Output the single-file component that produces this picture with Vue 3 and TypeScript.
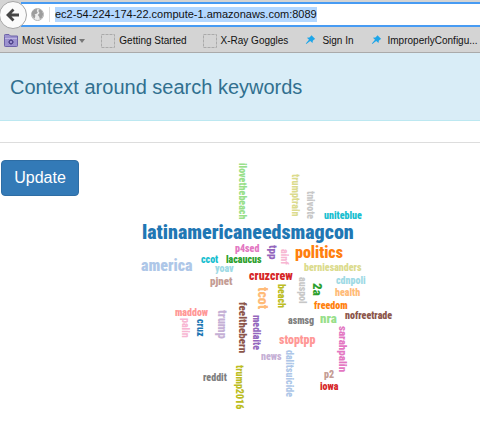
<script setup lang="ts">
interface Word {
  text: string
  x: number
  y: number
  size: number
  color: string
  vertical?: boolean
}

// x and y give the start of the word's baseline on the cloud canvas.
const words: Word[] = [
  { text: 'ilovethebeach', x: 239, y: 162, size: 10, color: '#98df8a', vertical: true },
  { text: 'trumptrain', x: 292, y: 173, size: 10, color: '#dbdb8d', vertical: true },
  { text: 'tnivote', x: 307, y: 190, size: 10, color: '#c7c7c7', vertical: true },
  { text: 'uniteblue', x: 324, y: 218, size: 10, color: '#17becf' },
  { text: 'latinamericaneedsmagcon', x: 142, y: 238, size: 20, color: '#1f77b4' },
  { text: 'p4sed', x: 235, y: 251, size: 10, color: '#e377c2' },
  { text: 'tpp', x: 269, y: 244, size: 11, color: '#9467bd', vertical: true },
  { text: 'ainf', x: 281, y: 248, size: 10, color: '#f7b6d2', vertical: true },
  { text: 'politics', x: 295, y: 257, size: 16, color: '#ff7f0e' },
  { text: 'ccot', x: 201, y: 262, size: 10, color: '#17becf' },
  { text: 'lacaucus', x: 226, y: 262, size: 10, color: '#2ca02c' },
  { text: 'america', x: 141, y: 270, size: 16, color: '#aec7e8' },
  { text: 'yoav', x: 215, y: 271, size: 10, color: '#9edae5' },
  { text: 'berniesanders', x: 304, y: 270, size: 10, color: '#dbdb8d' },
  { text: 'pjnet', x: 210, y: 284, size: 11, color: '#c49c94' },
  { text: 'cruzcrew', x: 249, y: 279, size: 12, color: '#d62728' },
  { text: 'cdnpoli', x: 336, y: 283, size: 10, color: '#9edae5' },
  { text: 'tcot', x: 258, y: 286, size: 14, color: '#ffbb78', vertical: true },
  { text: 'beach', x: 278, y: 283, size: 10, color: '#bcbd22', vertical: true },
  { text: 'auspol', x: 299, y: 276, size: 10, color: '#c7c7c7', vertical: true },
  { text: '2a', x: 313, y: 282, size: 13, color: '#2ca02c', vertical: true },
  { text: 'health', x: 335, y: 295, size: 10, color: '#ffbb78' },
  { text: 'freedom', x: 314, y: 308, size: 10, color: '#ff7f0e' },
  { text: 'maddow', x: 175, y: 315, size: 10, color: '#ff9896' },
  { text: 'asmsg', x: 288, y: 323, size: 10, color: '#7f7f7f' },
  { text: 'nra', x: 320, y: 322, size: 13, color: '#98df8a' },
  { text: 'nofreetrade', x: 345, y: 318, size: 10, color: '#8c564b' },
  { text: 'palin', x: 182, y: 317, size: 10, color: '#f7b6d2', vertical: true },
  { text: 'cruz', x: 197, y: 318, size: 10, color: '#1f77b4', vertical: true },
  { text: 'trump', x: 218, y: 309, size: 12, color: '#c5b0d5', vertical: true },
  { text: 'feelthebern', x: 239, y: 301, size: 11, color: '#8c564b', vertical: true },
  { text: 'mediaite', x: 253, y: 314, size: 10, color: '#9467bd', vertical: true },
  { text: 'stoptpp', x: 279, y: 343, size: 12, color: '#ff9896' },
  { text: 'sarahpalin', x: 339, y: 325, size: 11, color: '#e377c2', vertical: true },
  { text: 'news', x: 261, y: 359, size: 10, color: '#c5b0d5' },
  { text: 'dalitsuicide', x: 286, y: 349, size: 10, color: '#aec7e8', vertical: true },
  { text: 'reddit', x: 203, y: 380, size: 10, color: '#7f7f7f' },
  { text: 'trump2016', x: 236, y: 364, size: 10, color: '#bcbd22', vertical: true },
  { text: 'p2', x: 324, y: 377, size: 10, color: '#c49c94' },
  { text: 'iowa', x: 320, y: 389, size: 10, color: '#d62728' },
]

function placement(word: Word): string {
  return `translate(${word.x} ${word.y})` + (word.vertical ? ' rotate(90)' : '')
}
</script>

<template>
  <div class="window">
    <header class="chrome">
      <div class="toolbar">
        <button class="back" type="button" aria-label="Back">
          <svg width="14" height="14" viewBox="0 0 14 14">
            <path d="M7.5 1.5 2 7l5.5 5.5M2.5 7H13" fill="none" stroke="#454545" stroke-width="2.8" />
          </svg>
        </button>
        <div class="address">
          <svg class="globe" width="13" height="13" viewBox="0 0 13 13">
            <circle cx="6.5" cy="6.5" r="6" fill="#ededed" stroke="#b4b4b4" />
            <path d="M1 4 3.5 1.2 6.5 1 5.7 3 6.8 4.6 5.2 6 3.6 6.2 4.4 7.8 3.6 10.8 1.7 9 .8 6.5ZM8 1l2.7 1.6L12.2 6l-1 3.5-2.4 1.8-.6-2.6-1.4-1.6L8.6 5 7.4 3.2Z" fill="#9d9d9d" />
          </svg>
          <span class="url"><a href="#">ec2-54-224-174-22.compute-1.amazonaws.com:8089</a></span>
        </div>
      </div>
      <nav class="bookmarks">
        <a href="#" class="bookmark">
          <svg class="icon" width="16" height="13" viewBox="0 0 16 13">
            <path d="M1.5 2.5V1.3Q1.5.5 2.3.5H6L7.5 2H14.5V11.7Q14.5 12.5 13.7 12.5H2.3Q1.5 12.5 1.5 11.7Z" fill="#9c92cf" stroke="#6d62a8" />
            <path d="M2 4.5H14" stroke="#bdb5e3" />
            <circle cx="8" cy="8" r="1.7" fill="none" stroke="#50458c" />
            <path d="M8 5v1.2M8 9.8V11M5 8h1.2M9.8 8H11M5.9 5.9l.9.9M9.2 9.2l.9.9M10.1 5.9l-.9.9M6.8 9.2l-.9.9" stroke="#50458c" />
          </svg>
          Most Visited
          <svg width="6" height="4" viewBox="0 0 6 4"><path d="M0 0H6L3 4Z" fill="#777" /></svg>
        </a>
        <a href="#" class="bookmark">
          <svg class="icon" width="16" height="14" viewBox="0 0 16 14">
            <rect x="1.5" y=".5" width="13" height="13" fill="none" stroke="#aaa" stroke-dasharray="3 1" />
          </svg>
          Getting Started
        </a>
        <a href="#" class="bookmark">
          <svg class="icon" width="16" height="14" viewBox="0 0 16 14">
            <rect x="1.5" y=".5" width="13" height="13" fill="none" stroke="#aaa" stroke-dasharray="3 1" />
          </svg>
          X-Ray Goggles
        </a>
        <a v-for="title in ['Sign In', 'ImproperlyConfigu...']" :key="title" href="#" class="bookmark">
          <svg class="icon" width="16" height="14" viewBox="0 0 16 14">
            <path d="M8.5 1.3 12.2 4.9 11.1 5.4 9.8 6.8 9.5 9 7.2 6.9 3.3 10 2.8 9.6 6 5.8 3.9 3.7 6.4 3.4 7.7 2.2Z" fill="#1da5e8" />
          </svg>
          {{ title }}
        </a>
      </nav>
    </header>

    <div class="banner"><h1>Context around search keywords</h1></div>

    <main class="content">
      <button class="update" type="button">Update</button>
      <svg class="cloud" viewBox="80 159 400 260">
        <text
          v-for="word in words"
          :key="word.text"
          :transform="placement(word)"
          :font-size="word.size"
          :fill="word.color"
        >{{ word.text }}</text>
      </svg>
    </main>
  </div>
</template>

<style>
body {
  margin: 0;
  background: #fff;
}
</style>

<style scoped>
.window {
  margin-right: 20px;
  font-family: "Liberation Sans", Arial, sans-serif;
  color: #111;
}
.chrome {
  background: #d4d4d4;
  border-bottom: 1px solid #aaa;
}
.toolbar {
  display: flex;
  align-items: center;
  height: 29px;
}
.back {
  display: flex;
  align-items: center;
  justify-content: center;
  flex: none;
  box-sizing: border-box;
  width: 28px;
  height: 28px;
  margin-left: -1px;
  padding: 0;
  border: 1px solid #a5a5a5;
  border-radius: 50%;
  background: #fafafa;
  z-index: 1;
}
.address {
  display: flex;
  align-items: center;
  flex: 1;
  box-sizing: border-box;
  height: 25px;
  margin-left: -6px;
  padding-left: 10px;
  border: solid #479bf3;
  border-width: 2px 0;
  background: #fff;
}
.globe {
  flex: none;
}
.url {
  margin-left: 5px;
  padding-left: 5px;
  border-left: 1px solid #ddd;
  font-size: 11px;
  line-height: 15px;
}
.url a {
  display: block;
  background: #b3d7ff;
  color: #111;
  text-decoration: none;
}
.bookmarks {
  display: flex;
  gap: 15px;
  height: 23px;
  padding-left: 3px;
  overflow: hidden;
}
.bookmark {
  display: flex;
  align-items: center;
  gap: 3px;
  flex: none;
  font-size: 10px;
  color: #111;
  text-decoration: none;
  white-space: nowrap;
}
.icon {
  flex: none;
}
.banner {
  padding: 23px 10px 22px;
  border-bottom: 1px solid #bce8f1;
  background: #d9edf7;
}
h1 {
  margin: 0;
  font-size: 20px;
  line-height: 22px;
  font-weight: 400;
  color: #31708f;
}
.content {
  display: flex;
  align-items: flex-start;
  margin-top: 21px;
  padding: 17px 0 0 1px;
  border-top: 1px solid #ddd;
}
.update {
  flex: none;
  width: 78px;
  height: 36px;
  margin-right: 1px;
  padding: 0;
  border: 1px solid #2e6da4;
  border-radius: 4px;
  background: #337ab7;
  color: #fff;
  font-family: inherit;
  font-size: 16px;
}
.cloud {
  flex: 1;
  min-width: 0;
  font-family: Impact, "Roboto Condensed", "Liberation Sans Narrow", sans-serif;
  font-weight: 900;
}
</style>
